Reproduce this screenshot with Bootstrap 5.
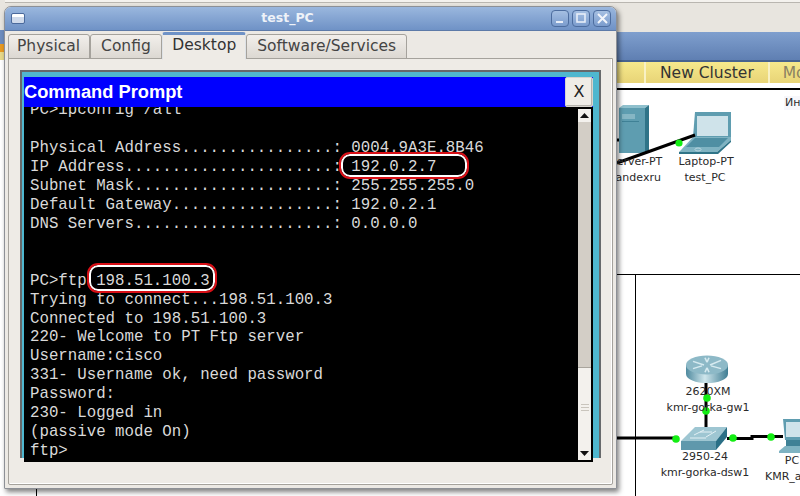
<!DOCTYPE html>
<html lang="en">
<head>
<meta charset="utf-8">
<title>test_PC</title>
<link href="https://cdn.jsdelivr.net/npm/bootstrap@5.3.0/dist/css/bootstrap.min.css" rel="stylesheet">
<style>
html,body{margin:0;width:800px;height:496px;overflow:hidden;background:#fff;}
.desk{width:800px;height:496px;position:relative;overflow:hidden;font-family:"DejaVu Sans",sans-serif;}
.band-top{height:32px;background:linear-gradient(#f4f2ee 0,#f4f2ee 2px,#b9b6b0 2px,#b9b6b0 3px,#e8e5df 3px);}
.band-blue{height:30px;background:linear-gradient(#7f9fce,#5f7fb2);border-bottom:2px solid #47638f;}
.band-tool{height:21px;background:linear-gradient(#f6e98c,#e8d477);padding-left:617px;font-size:15.5px;color:#333;line-height:22px;}
.tool-item{padding:0 14px;border-left:2px solid #f8f1c4;height:21px;white-space:nowrap;flex:none;}
.tool-item.first{width:27px;padding:0;border-left:0;}
.tool-item.dim{color:#8a8262;padding-left:13px;}
.band-gap{height:7px;background:#fff;border-bottom:2px solid #000;}
.floor{height:406px;background:#fff;}
.rule-h{position:absolute;left:617px;right:0;top:274px;height:1px;background:#000;}
.rule-v{position:absolute;left:635px;top:274px;bottom:0;width:1px;background:#000;}
.rule-v2{position:absolute;left:36px;top:480px;bottom:0;width:1px;background:#000;}
.left-strip{position:absolute;left:0;top:0;width:5px;height:130px;background:linear-gradient(#e8e5df 0,#e8e5df 30px,#6d8dbf 30px,#6d8dbf 44px,#e89a22 44px,#e89a22 52px,#e8d98a 52px,#e8d98a 60px,#fff 60px);}
.lbl{position:absolute;font-size:11px;color:#2a2a2a;white-space:nowrap;transform:translateX(-50%);line-height:14px;}
.lbl-plain{position:absolute;font-size:11px;color:#2a2a2a;white-space:nowrap;line-height:14px;background:#f7f7fb;padding-left:1px;}
.wire{position:absolute;left:0;top:0;width:800px;height:496px;}
.node{position:absolute;}
.win{position:absolute;left:4px;top:6px;width:613px;height:483px;border:1px solid #8d9096;border-radius:7px 7px 1px 1px;background:#ece9e4;box-shadow:2px 3px 5px rgba(0,0,0,.5);}
.win-title{height:24px;border-radius:6px 6px 0 0;background:linear-gradient(#9ab7de,#6f92c6);border-bottom:1px solid #5d7aa8;color:#eef2f8;font-weight:700;font-size:12.5px;padding:0 5px 1px 6px;}
.win-ttl{flex:1;text-align:center;padding-left:2px;}
.win-menu{width:14px;height:11px;border:1px solid #4b6a9c;border-radius:2px;background:linear-gradient(#fff 0,#fff 3px,#cfdaeb 3px);}
.win-btn{width:18px;height:17px;margin-left:3px;border:1px solid #4d6d9f;border-radius:4px;background:linear-gradient(#a5bfe2,#7b9ccd);display:flex;align-items:center;justify-content:center;}
.win-body{flex:1;padding:1px 3px 3px 3px;min-height:0;}
.tabs-row{border-bottom:0;height:27px;flex-wrap:nowrap;position:relative;z-index:1;}
.tabs-row .nav-link{font-size:15.5px;line-height:18px;color:#444;background:linear-gradient(#f2efeb,#dcd8d2);border:1px solid #a5a29c;border-radius:3px 3px 0 0;padding:2px 10px 3px;margin:2px 0 0;height:25px;white-space:nowrap;}
.tabs-row .tab-phys{padding-left:8px;padding-right:8.5px;}
.tabs-row .tab-conf{padding-left:10.5px;padding-right:10.5px;}
.tabs-row .nav-link.active{color:#333;background:#eeebe6;border-top:3px solid #6f92c6;border-bottom-color:#eeebe6;margin:0;height:28px;padding:1px 9px 3px;}
.pane{flex:1;border:1px solid #a5a29c;border-radius:0 0 2px 2px;padding:11px 11px 24px 11px;min-height:0;margin-top:-1px;background:#eeebe6;box-shadow:inset -1px -1px 0 #fff;}
.teal{height:388px;border:2px solid #67696b;border-bottom:0;background:#4fb7cf;padding:5px 6px 0 2px;width:581px;}
.cmd-head{height:30px;background:#0000ff;color:#fff;font-family:"Liberation Sans",sans-serif;font-weight:700;font-size:18.3px;line-height:30px;flex:none;}
.cmd-title{flex:1;}
.cmd-x{width:28px;height:30px;padding:0;border:1px solid #d7d4ce;border-radius:2px;background:#efece7;color:#222;font-family:"DejaVu Sans",sans-serif;font-weight:400;font-size:16px;line-height:28px;box-shadow:inset -1px -1px 0 #b6b3ad;}
.term{flex:1;background:#000;min-height:0;position:relative;margin-bottom:-4px;}
.term-out{flex:1;overflow:hidden;padding:0 0 1px 6px;margin:0;color:#d9d9d9;font-family:"Liberation Mono",monospace;font-size:15.75px;line-height:18.95px;white-space:pre;display:flex;flex-direction:column;justify-content:flex-end;min-width:0;}
.term-out span{display:block;height:18.95px;flex:none;}
.scroll{width:13px;margin:2px 2px 2px 0;background:#d3cec6;display:flex;flex-direction:column;flex:none;}
.scroll-b{height:13px;background:#f3f1ed;display:flex;align-items:center;justify-content:center;flex:none;}
.scroll-t{flex:1;}
.scroll-th{height:80px;background:#f3f1ed;border-top:1px solid #a9a59d;display:flex;align-items:center;justify-content:center;}
.ring{position:absolute;border:2px solid #fff;outline:2px solid #d80f16;border-radius:9px;}
.ring-a{left:317px;top:47px;width:126px;height:23px;}
.ring-b{left:65px;top:158px;width:126px;height:26px;}
</style>
</head>
<body>
<div class="desk">
  <div class="d-flex flex-column">
    <div class="band-top"></div>
    <div class="band-blue"></div>
    <div class="band-tool d-flex"><div class="tool-item first"></div><div class="tool-item">New Cluster</div><div class="tool-item dim">Mo</div></div>
    <div class="band-gap"></div>
    <div class="floor"></div>
  </div>
  <div class="left-strip"></div>
  <div class="rule-h"></div><div class="rule-v"></div><div class="rule-v2"></div>

  <!-- server -->
  <svg class="node" style="left:617px;top:105px" width="34" height="50" viewBox="0 0 34 50">
    <path d="M2 3L6 0H32L28 3Z" fill="#8fc0cd"/>
    <path d="M2 3H28V48H2Z" fill="#5e9db0"/>
    <path d="M28 3L32 0V45L28 48Z" fill="#2f7488"/>
    <rect x="5" y="9" width="13" height="5" fill="#86b6c4"/>
    <rect x="5" y="16" width="17" height="1" fill="#3f8196"/>
  </svg>
  <!-- laptop -->
  <svg class="node" style="left:678px;top:111px" width="54" height="43" viewBox="0 0 54 43">
    <path d="M17 1H53V26H15Z" fill="#5f9db0"/>
    <rect x="19" y="5" width="31" height="20" fill="#cfe3ea"/>
    <path d="M15 26H53L53 29L39 41H1L3 39Z" fill="#7fb3c2"/>
    <path d="M17 27H50L41 36H8Z" fill="#4f8fa3"/>
    <path d="M1 41H39L53 29V31L40 43H1Z" fill="#2f7488"/>
    <ellipse cx="20" cy="38.500" rx="3" ry="1.500" fill="none" stroke="#cfe3ea" stroke-width=".7"/>
  </svg>
  <!-- router -->
  <svg class="node" style="left:685px;top:355px" width="44" height="29" viewBox="0 0 44 32" preserveAspectRatio="none">
    <defs>
      <linearGradient id="rg" x1="0" x2="1" y1="0" y2="0"><stop offset="0" stop-color="#4f8a9f"/><stop offset=".45" stop-color="#cfe6ec"/><stop offset="1" stop-color="#3f7d93"/></linearGradient>
    </defs>
    <path d="M1 11V21C1 27 11 31 22 31S43 27 43 21V11Z" fill="url(#rg)"/>
    <ellipse cx="22" cy="11" rx="21" ry="10.500" fill="#8db9c7"/>
    <path d="M8 7L19 11M8 15L17 12M25 11L36 6M26 12L36 15M20 3L22 8M24 3L22 8M20 19L22 14M24 19L22 14" stroke="#d6eaf0" stroke-width="1.600" fill="none"/>
  </svg>
  <!-- switch -->
  <svg class="node" style="left:680px;top:426px" width="48" height="24" viewBox="0 0 48 24">
    <path d="M1 15L15 1H47L36 15Z" fill="#9ec6d2"/>
    <path d="M1 15H36V24H1Z" fill="#5f98ac"/>
    <path d="M36 15L47 1V11L36 24Z" fill="#2a6f86"/>
    <path d="M14 9L24 4M26 11L36 5M20 6L32 6M10 12H26" stroke="#e3f0f4" stroke-width="1" fill="none"/>
  </svg>
  <!-- pc -->
  <svg class="node" style="left:778px;top:418px" width="24" height="36" viewBox="0 0 24 36">
    <path d="M5 1H24V22H7Z" fill="#5f9db0"/>
    <rect x="8" y="4" width="16" height="15" fill="#cfe3ea"/>
    <rect x="8" y="22" width="16" height="6" fill="#3f8196"/>
    <path d="M1 33L7 28H24V35H1Z" fill="#7fb3c2"/>
  </svg>
  <svg class="wire" viewBox="0 0 800 496">
    <g stroke="#000" stroke-width="3" fill="none">
      <path d="M617 163L695 135"/>
      <path d="M617 140H619"/>
      <path d="M706 383V427"/>
      <path d="M617 438H676"/>
      <path d="M727 438.500H752V436.500H783"/>
    </g>
    <g fill="#13ee13">
      <circle cx="679" cy="143" r="3.600"/>
      <circle cx="707" cy="398" r="3.800"/>
      <circle cx="706" cy="411" r="3.800"/>
      <circle cx="676" cy="439" r="3.800"/>
      <circle cx="733" cy="438" r="3.800"/>
      <circle cx="771" cy="437" r="3.800"/>
    </g>
  </svg>

  <div class="lbl" style="left:636px;top:155px">Server-PT</div>
  <div class="lbl" style="left:706px;top:155px">Laptop-PT</div>
  <div class="lbl" style="left:635px;top:171px">yandexru</div>
  <div class="lbl" style="left:705px;top:171px">test_PC</div>
  <div class="lbl-plain" style="left:784px;top:96px">Инт</div>
  <div class="lbl" style="left:708px;top:385px">2620XM</div>
  <div class="lbl" style="left:708px;top:401px">kmr-gorka-gw1</div>
  <div class="lbl" style="left:705px;top:450px">2950-24</div>
  <div class="lbl" style="left:705px;top:466px">kmr-gorka-dsw1</div>
  <div class="lbl" style="left:792px;top:454px">PC</div>
  <div class="lbl" style="left:765px;top:470px;transform:none">KMR_a</div>

  <div class="win d-flex flex-column">
    <div class="win-title d-flex align-items-center">
      <div class="win-menu"></div>
      <div class="win-ttl">test_PC</div>
      <div class="win-btn"><svg width="9" height="9" viewBox="0 0 9 9"><path d="M0 8H7" stroke="#e8eef8" stroke-width="2"/></svg></div>
      <div class="win-btn"><svg width="10" height="10" viewBox="0 0 10 10"><rect x="1" y="1" width="8" height="8" fill="none" stroke="#e8eef8" stroke-width="1.600"/></svg></div>
      <div class="win-btn"><svg width="11" height="11" viewBox="0 0 11 11"><path d="M1 1L10 10M10 1L1 10" stroke="#f2f5fb" stroke-width="2"/></svg></div>
    </div>
    <div class="win-body d-flex flex-column">
      <ul class="nav nav-tabs tabs-row">
        <li class="nav-item"><a class="nav-link tab-phys" href="#">Physical</a></li>
        <li class="nav-item"><a class="nav-link tab-conf" href="#">Config</a></li>
        <li class="nav-item"><a class="nav-link active" href="#">Desktop</a></li>
        <li class="nav-item"><a class="nav-link" href="#">Software/Services</a></li>
      </ul>
      <div class="pane">
        <div class="teal d-flex flex-column">
          <div class="cmd-head d-flex">
            <div class="cmd-title">Command Prompt</div>
            <button type="button" class="btn cmd-x">X</button>
          </div>
          <div class="term d-flex">
            <div class="term-out"><span>PC&gt;ipconfig /all</span><span> </span><span>Physical Address................: 0004.9A3E.8B46</span><span>IP Address......................: 192.0.2.7</span><span>Subnet Mask.....................: 255.255.255.0</span><span>Default Gateway.................: 192.0.2.1</span><span>DNS Servers.....................: 0.0.0.0</span><span> </span><span> </span><span>PC&gt;ftp 198.51.100.3</span><span>Trying to connect...198.51.100.3</span><span>Connected to 198.51.100.3</span><span>220- Welcome to PT Ftp server</span><span>Username:cisco</span><span>331- Username ok, need password</span><span>Password:</span><span>230- Logged in</span><span>(passive mode On)</span><span>ftp&gt;</span></div>
            <div class="scroll">
              <div class="scroll-b"><svg width="9" height="5" viewBox="0 0 9 5"><path d="M0 5L4.500 0L9 5Z" fill="#111"/></svg></div>
              <div class="scroll-t"></div>
              <div class="scroll-th"><svg width="8" height="7" viewBox="0 0 8 7"><path d="M0 .5H8M0 3.500H8M0 6.500H8" stroke="#c9c5bd"/></svg></div>
              <div class="scroll-b"><svg width="9" height="5" viewBox="0 0 9 5"><path d="M0 0L4.500 5L9 0Z" fill="#111"/></svg></div>
            </div>
            <div class="ring ring-a"></div>
            <div class="ring ring-b"></div>
          </div>
        </div>
      </div>
    </div>
  </div>
</div>
<script src="https://cdn.jsdelivr.net/npm/bootstrap@5.3.0/dist/js/bootstrap.bundle.min.js"></script>
</body>
</html>
